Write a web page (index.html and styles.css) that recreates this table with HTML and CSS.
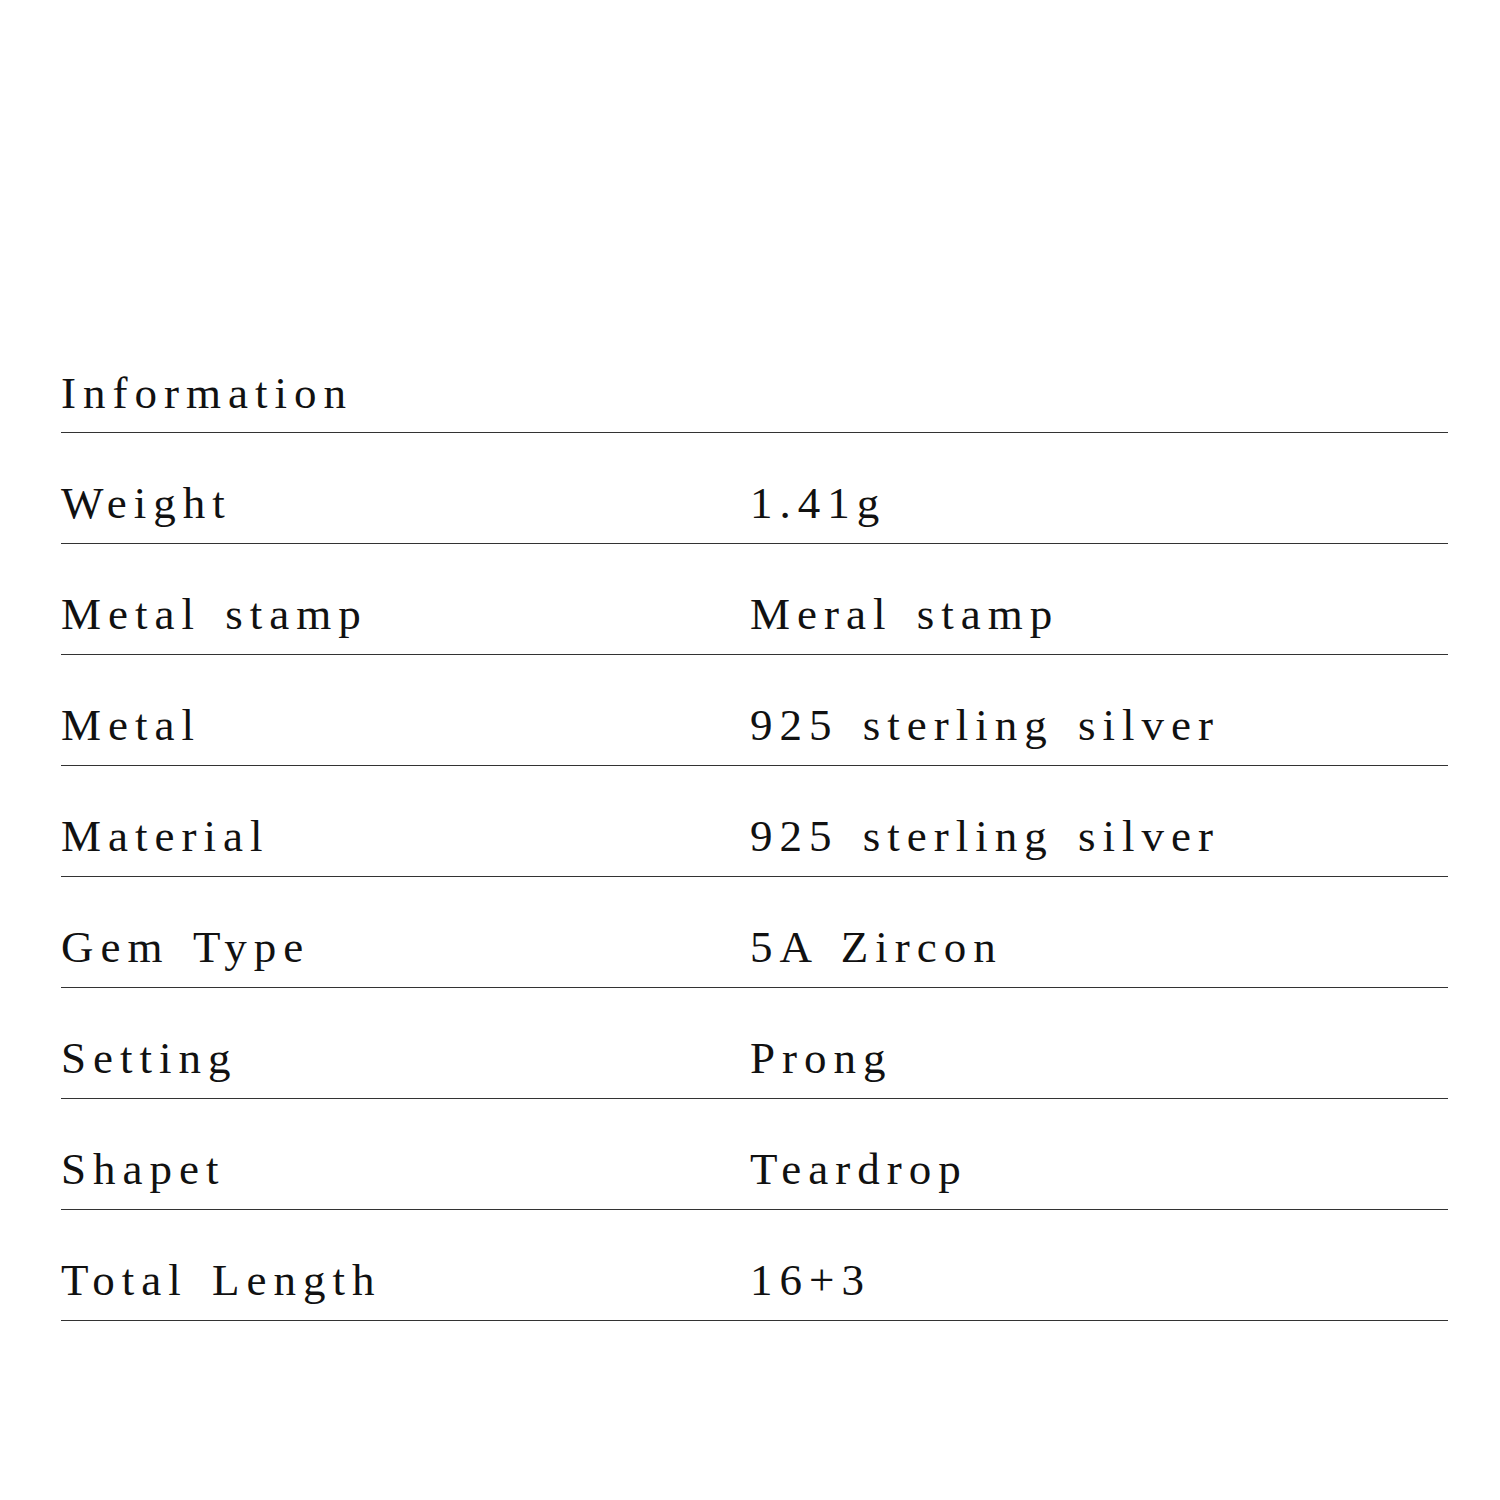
FILE: index.html
```html
<!DOCTYPE html>
<html lang="en">
<head>
<meta charset="utf-8">
<title>Information</title>
<link rel="stylesheet" href="styles.css">
</head>
<body>
<section class="spec">
  <h2 class="spec-title">Information</h2>
  <dl class="spec-list">
    <div class="spec-row"><dt>Weight</dt><dd>1.41g</dd></div>
    <div class="spec-row"><dt>Metal stamp</dt><dd>Meral stamp</dd></div>
    <div class="spec-row"><dt>Metal</dt><dd>925 sterling silver</dd></div>
    <div class="spec-row"><dt>Material</dt><dd>925 sterling silver</dd></div>
    <div class="spec-row"><dt>Gem Type</dt><dd>5A Zircon</dd></div>
    <div class="spec-row"><dt>Setting</dt><dd>Prong</dd></div>
    <div class="spec-row"><dt>Shapet</dt><dd>Teardrop</dd></div>
    <div class="spec-row"><dt>Total Length</dt><dd>16+3</dd></div>
  </dl>
</section>
</body>
</html>
```

FILE: styles.css
```css
html, body {
  margin: 0;
  padding: 0;
  background: #ffffff;
}

body {
  width: 1500px;
  min-height: 1500px;
  font-family: "Liberation Serif", "Times New Roman", serif;
  color: #111111;
}

.spec {
  padding: 370px 52px 0 61px;
}

.spec-title,
.spec-row dt,
.spec-row dd {
  font-size: 45px;
  line-height: 47px;
  font-weight: 400;
  letter-spacing: 7px;
  word-spacing: 6px;
}

.spec-title {
  margin: 0;
  padding: 0 0 15px;
  border-bottom: 1px solid #333333;
}

.spec-list {
  margin: 0;
  padding: 0;
}

.spec-row {
  display: grid;
  grid-template-columns: 689px 1fr;
  padding: 47px 0 16px;
  border-bottom: 1px solid #333333;
}

.spec-row dt,
.spec-row dd {
  margin: 0;
  white-space: nowrap;
}
```
